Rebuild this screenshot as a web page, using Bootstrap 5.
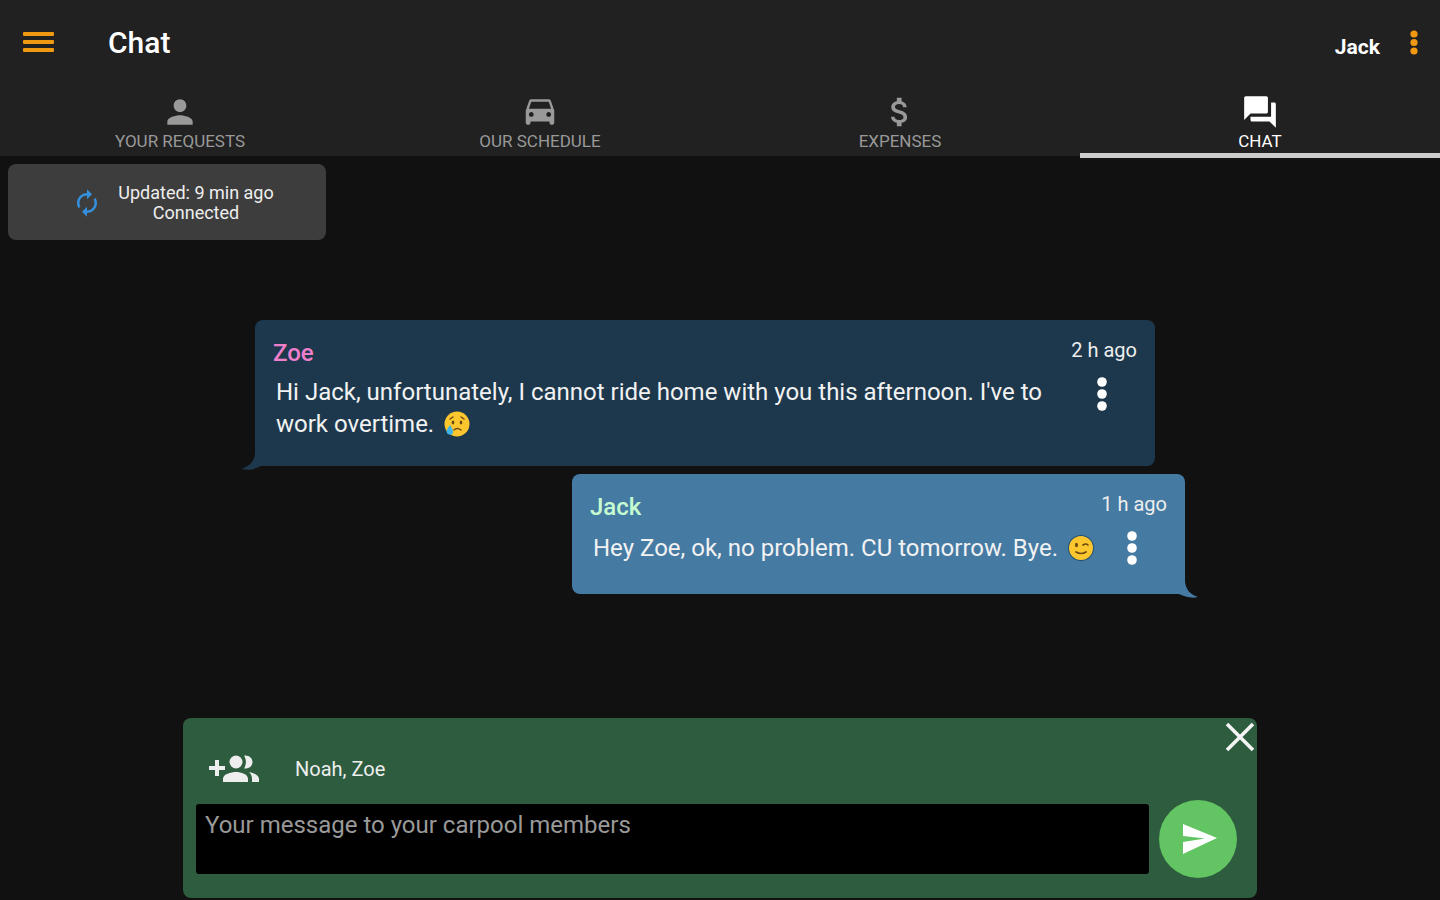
<!DOCTYPE html>
<html lang="en">
<head>
<meta charset="utf-8">
<meta name="viewport" content="width=device-width, initial-scale=1">
<title>Carpool – Chat</title>
<link href="https://cdn.jsdelivr.net/npm/bootstrap@5.3.0/dist/css/bootstrap.min.css" rel="stylesheet">
<style>
  body { background: #111; color: #fff; font-family: Roboto, "Liberation Sans", sans-serif; }
  svg { display: block; fill: currentColor; }
  .plain { background: none; border: 0; padding: 0; color: inherit; }
  .amber { color: #f0980f; }

  .app-header { background: #212121; }
  .app-bar { height: 88px; padding: 0 16px 4px 22px; }
  .app-title { font-size: 30px; line-height: 32px; font-weight: 500; margin: 2px 0 0 54px; }
  .user-name { font-size: 21px; line-height: 24px; font-weight: 700; margin: 10px 24px 0 0; }

  .app-tabs .nav-link { position: relative; height: 68px; padding: 5px 0 0; color: #999; font-size: 17px; line-height: 20px; border-radius: 0; }
  .app-tabs .nav-link svg { margin: 0 auto; }
  .app-tabs .nav-link.active { color: #fff; }
  .app-tabs .nav-link.active::after { content: ""; position: absolute; left: 0; right: 0; bottom: -2px; height: 5px; background: #ccc; }

  .sync-card { width: 318px; min-height: 76px; margin: 8px; padding: 2px 0 0 12px; background: #3d3d3d; border-radius: 8px; font-size: 18px; line-height: 20px; color: #eee; }
  .sync-card svg { color: #3490dc; }

  .thread { width: 100%; max-width: 930px; padding-top: 72px; }
  .bubble { position: relative; border-radius: 8px; padding: 18px; }
  .bubble-in { background: #1d384c; width: 900px; max-width: 100%; min-height: 146px; }
  .bubble-out { background: #457aa3; width: 613px; max-width: 100%; min-height: 120px; }
  .bubble .tail { position: absolute; bottom: -4px; }
  .bubble-in .tail { left: -14px; color: #1d384c; }
  .bubble-out .tail { right: -14px; color: #457aa3; }
  .author { font-size: 24px; line-height: 30px; font-weight: 500; }
  .from-zoe { color: #f07fcb; }
  .from-jack { color: #c5fcd0; }
  .sent-at { font-size: 20px; line-height: 24px; color: #eee; }
  .message-row { margin-top: 8px; }
  .message-text { font-size: 24px; line-height: 32px; margin: 0 0 0 3px; color: #f2f2f2; }
  .message-text svg { display: inline-block; margin: -4px 0 0 4px; }
  .message-menu { margin-right: 29px; }

  .composer { position: relative; width: 100%; max-width: 1074px; background: #2d5c3f; border-radius: 8px; padding: 34px 20px 20px 13px; margin-bottom: 2px; }
  .composer-close { position: absolute; top: 4px; right: 2px; }
  .recipients-row { margin-bottom: 14px; color: #eee; }
  .recipients { font-size: 20px; line-height: 24px; margin-left: 36px; }
  .composer textarea { height: 70px; margin-right: 10px; resize: none; background: #000; border: 0; border-radius: 3px; color: #fff; font-size: 24px; line-height: 28px; padding: 7px 9px; }
  .composer textarea:focus { background: #000; color: #fff; }
  .composer textarea::placeholder { color: #999; opacity: 1; }
  .send { width: 78px; height: 78px; border-radius: 50%; background: #62c462; flex: none; }
</style>
</head>
<body class="d-flex flex-column min-vh-100">

<header class="app-header">
  <div class="app-bar d-flex align-items-center">
    <button class="plain amber" type="button" aria-label="Open menu">
      <svg width="32" height="22" viewBox="0 0 32 22"><rect x="1" y="1" width="31" height="4" rx="1"/><rect x="1" y="9" width="31" height="4" rx="1"/><rect x="1" y="17" width="31" height="4" rx="1"/></svg>
    </button>
    <h1 class="app-title">Chat</h1>
    <span class="user-name ms-auto">Jack</span>
    <button class="plain amber" type="button" aria-label="More options">
      <svg width="20" height="26" viewBox="0 0 20 26"><circle cx="10" cy="5" r="3.600"/><circle cx="10" cy="13.500" r="3.600"/><circle cx="10" cy="22" r="3.600"/></svg>
    </button>
  </div>
  <nav class="app-tabs row g-0 text-center" aria-label="Sections">
    <a class="nav-link col" href="#requests">
      <svg width="38" height="38" viewBox="0 0 24 24"><path d="M12 12c2.210 0 4-1.790 4-4s-1.790-4-4-4-4 1.790-4 4 1.790 4 4 4zm0 2c-2.670 0-8 1.340-8 4v2h16v-2c0-2.660-5.330-4-8-4z"/></svg>
      YOUR REQUESTS</a>
    <a class="nav-link col" href="#schedule">
      <svg width="38" height="38" viewBox="0 0 24 24"><path d="M18.920 5.010C18.720 4.420 18.160 4 17.500 4h-11c-.66 0-1.210.42-1.420 1.010L3 11v8c0 .55.45 1 1 1h1c.55 0 1-.45 1-1v-1h12v1c0 .55.45 1 1 1h1c.55 0 1-.45 1-1v-8l-2.080-5.990zM6.500 15c-.83 0-1.500-.67-1.500-1.500S5.670 12 6.500 12s1.500.67 1.500 1.500S7.330 15 6.500 15zm11 0c-.83 0-1.500-.67-1.500-1.500s.67-1.500 1.500-1.500 1.500.67 1.500 1.500-.67 1.500-1.500 1.500zM5 10l1.500-4.500h11L19 10H5z"/></svg>
      OUR SCHEDULE</a>
    <a class="nav-link col" href="#expenses">
      <svg width="38" height="38" viewBox="0 0 24 24"><path d="M11.800 10.900c-2.270-.59-3-1.200-3-2.150 0-1.090 1.010-1.850 2.700-1.850 1.780 0 2.440.85 2.500 2.100h2.210c-.07-1.720-1.120-3.300-3.210-3.810V3h-3v2.160c-1.940.42-3.500 1.680-3.500 3.610 0 2.310 1.910 3.460 4.700 4.130 2.500.6 3 1.480 3 2.410 0 .69-.49 1.790-2.700 1.790-2.060 0-2.870-.92-2.980-2.100h-2.200c.12 2.190 1.760 3.420 3.680 3.830V21h3v-2.150c1.950-.37 3.500-1.500 3.500-3.550 0-2.840-2.430-3.810-4.700-4.400z"/></svg>
      EXPENSES</a>
    <a class="nav-link col active" href="#chat" aria-current="page">
      <svg width="38" height="38" viewBox="0 0 24 24"><path d="M21 6h-2v9H6v2c0 .55.45 1 1 1h11l4 4V7c0-.55-.45-1-1-1zm-4 6V3c0-.55-.45-1-1-1H3c-.55 0-1 .45-1 1v14l4-4h10c.55 0 1-.45 1-1z"/></svg>
      CHAT</a>
  </nav>
</header>

<main class="flex-grow-1 d-flex flex-column">
  <div class="sync-card d-flex align-items-center justify-content-center text-center" role="status">
    <svg class="me-3" width="30" height="30" viewBox="0 0 24 24"><path d="M12 6v3l4-4-4-4v3c-4.420 0-8 3.580-8 8 0 1.570.46 3.030 1.240 4.260L6.700 14.800C6.250 13.970 6 13.010 6 12c0-3.310 2.690-6 6-6zm6.760 1.740L17.300 9.200c.44.84.7 1.790.7 2.800 0 3.310-2.690 6-6 6v-3l-4 4 4 4v-3c4.420 0 8-3.580 8-8 0-1.570-.46-3.030-1.240-4.260z"/></svg>
    <div>Updated: 9 min ago<br>Connected</div>
  </div>

  <section class="thread mx-auto d-flex flex-column gap-2" aria-label="Messages">
    <article class="bubble bubble-in align-self-start">
      <svg class="tail" width="30" height="18" viewBox="0 0 30 18"><path d="M14 0C14 9 9 14 0 17C8 19 14 17 20 14H30V0Z"/></svg>
      <div class="d-flex justify-content-between"><span class="author from-zoe">Zoe</span><time class="sent-at">2 h ago</time></div>
      <div class="message-row d-flex justify-content-between align-items-start">
        <p class="message-text">Hi Jack, unfortunately, I cannot ride home with you this afternoon. I've to work overtime.
          <svg width="26" height="26" viewBox="0 0 26 26" role="img" aria-label="Crying face"><circle cx="13" cy="13" r="12.500" fill="#fcc62e"/><g fill="none" stroke="#6b4a12" stroke-width="1.500" stroke-linecap="round"><path d="M6 8l3-2M17 6l3 2M10 19q3-3 7 0"/></g><ellipse cx="9" cy="11.500" rx="1.300" ry="2" fill="#6b4a12"/><ellipse cx="17" cy="11.500" rx="1.300" ry="2" fill="#6b4a12"/><path d="M6 14c-3 4-4 6-3 8s6 3 6-1c0-2-1-4-3-7z" fill="#3fb4e8"/></svg></p>
        <button class="plain message-menu" type="button" aria-label="Message options"><svg width="12" height="36" viewBox="0 0 12 36"><circle cx="6" cy="6" r="4.800"/><circle cx="6" cy="18" r="4.800"/><circle cx="6" cy="30" r="4.800"/></svg></button>
      </div>
    </article>
    <article class="bubble bubble-out align-self-end">
      <svg class="tail" width="30" height="18" viewBox="0 0 30 18"><path d="M16 0C16 8 20 14 29 17C22 19 15 16 10 14H0V0Z"/></svg>
      <div class="d-flex justify-content-between"><span class="author from-jack">Jack</span><time class="sent-at">1 h ago</time></div>
      <div class="message-row d-flex justify-content-between align-items-center">
        <p class="message-text">Hey Zoe, ok, no problem. CU tomorrow. Bye.
          <svg width="26" height="26" viewBox="0 0 26 26" role="img" aria-label="Winking face"><circle cx="13" cy="13" r="13" fill="#28506e"/><circle cx="13" cy="13" r="12" fill="#fcc62e"/><ellipse cx="8.500" cy="10" rx="1.500" ry="2.200" fill="#6b4a12"/><path d="M15 10q3-2 5 0M8 17q5 3 10 0" fill="none" stroke="#6b4a12" stroke-width="1.700" stroke-linecap="round"/></svg></p>
        <button class="plain message-menu" type="button" aria-label="Message options"><svg width="12" height="36" viewBox="0 0 12 36"><circle cx="6" cy="6" r="4.800"/><circle cx="6" cy="18" r="4.800"/><circle cx="6" cy="30" r="4.800"/></svg></button>
      </div>
    </article>
  </section>

  <form class="composer mx-auto mt-auto">
    <button class="plain composer-close" type="button" aria-label="Close"><svg width="30" height="30" viewBox="0 0 30 30"><path d="M2 2L28 28M28 2L2 28" fill="none" stroke="#f4f4f4" stroke-width="3.600"/></svg></button>
    <div class="recipients-row d-flex align-items-center">
      <button class="plain" type="button" aria-label="Add recipients">
        <svg width="63" height="34" viewBox="0 0 63 34"><path d="M19 8h4v6h6v4h-6v6h-4v-6h-6v-4h6z"/><circle cx="40" cy="10" r="6.500"/><path d="M27 30v-3c0-5 8-7 13-7s12 2 12 7v3zM48 3.500c5-.5 8.500 2.500 8.500 6.500s-3.500 7-8.500 6.500c2.500-4 2.500-9 0-13zM53 20c5 1 10 3 10 7v3h-7v-3c0-3-1-5-3-7z"/></svg>
      </button>
      <span class="recipients">Noah, Zoe</span>
    </div>
    <div class="d-flex align-items-center">
      <textarea class="form-control" aria-label="Message" placeholder="Your message to your carpool members"></textarea>
      <button class="plain send d-flex align-items-center justify-content-center" type="submit" aria-label="Send">
        <svg width="40" height="34" viewBox="0 0 40 34"><path d="M5 2L39 16L5 32V20L27 16.500L5 14Z"/></svg>
      </button>
    </div>
  </form>
</main>
<script src="https://cdn.jsdelivr.net/npm/bootstrap@5.3.0/dist/js/bootstrap.bundle.min.js"></script>
</body>
</html>
